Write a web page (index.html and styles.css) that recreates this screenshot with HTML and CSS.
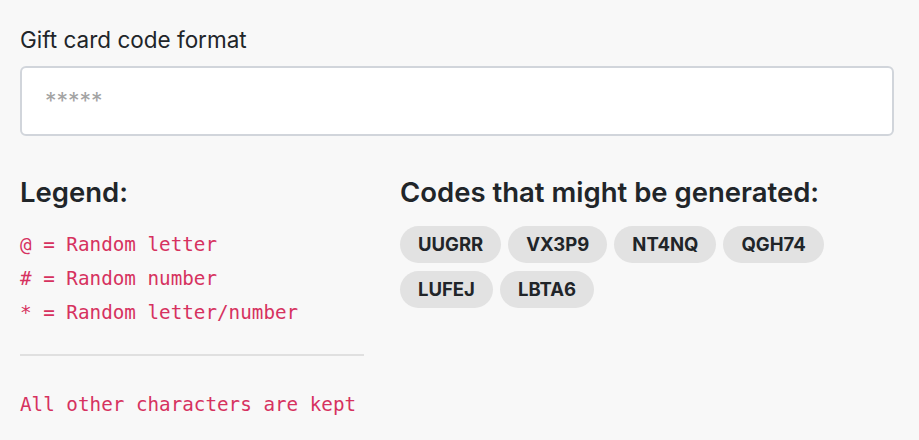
FILE: index.html
```html
<!DOCTYPE html>
<html lang="en">
<head>
    <meta charset="UTF-8">
    <meta name="viewport" content="width=device-width, initial-scale=1.0">
    <title>Gift card code format</title>
    <link rel="stylesheet" href="styles.css">
</head>
<body>
    <div class="page">
        <label class="field-label" for="codeFormat">Gift card code format</label>
        <input type="text" id="codeFormat" class="code-input" placeholder="*****">

        <div class="columns">
            <div class="legend">
                <h2>Legend:</h2>
                <ul class="legend-list">
                    <li>@ = Random letter</li>
                    <li># = Random number</li>
                    <li>* = Random letter/number</li>
                </ul>
                <hr class="divider">
                <p class="legend-note">All other characters are kept</p>
            </div>

            <div class="samples">
                <h2>Codes that might be generated:</h2>
                <div class="chips">
                    <span class="chip">UUGRR</span>
                    <span class="chip">VX3P9</span>
                    <span class="chip">NT4NQ</span>
                    <span class="chip">QGH74</span>
                    <span class="chip">LUFEJ</span>
                    <span class="chip">LBTA6</span>
                </div>
            </div>
        </div>
    </div>
</body>
</html>
```

FILE: styles.css
```css
body {
    margin: 0;
    background: #f8f8f8;
    color: #212529;
    font-family: Inter, "Noto Sans", sans-serif;
}
.page {
    padding: 25px 25px 0 20px;
}
.field-label {
    display: block;
    font-size: 22.5px;
    line-height: 30px;
    margin-bottom: 11px;
}
.code-input {
    display: block;
    box-sizing: border-box;
    width: 100%;
    height: 70px;
    padding: 0 23px;
    border: 2px solid #d1d5db;
    border-radius: 6px;
    background: #fff;
    font-family: Inter, "Noto Sans", sans-serif;
    font-size: 23px;
    color: #212529;
    outline: none;
}
.code-input::placeholder {
    color: #a3a3a3;
}
.columns {
    display: grid;
    grid-template-columns: 344px 1fr;
    gap: 36px;
    margin-top: 41px;
}
h2 {
    margin: 0;
    font-size: 27.5px;
    line-height: 31px;
    font-weight: 600;
}
.legend-list {
    list-style: none;
    margin: 20px 0 0;
    padding: 0;
}
.legend-list li,
.legend-note {
    font-family: "DejaVu Sans Mono", monospace;
    font-size: 19.25px;
    line-height: 34px;
    color: #d6325f;
}
.divider {
    border: none;
    border-top: 2px solid #e0e0e0;
    margin: 24px 0 0;
}
.legend-note {
    margin: 32px 0 0;
}
.chips {
    display: flex;
    flex-wrap: wrap;
    gap: 8px 7px;
    margin-top: 18px;
    max-width: 440px;
}
.chip {
    display: inline-block;
    background: #e2e2e2;
    border-radius: 19px;
    padding: 0 18px;
    height: 37px;
    line-height: 37px;
    font-size: 18.5px;
    font-weight: 700;
}
```
